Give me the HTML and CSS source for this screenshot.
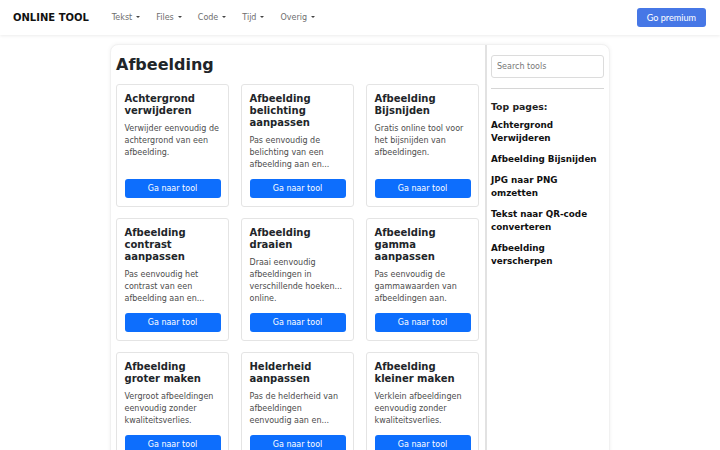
FILE: index.html
```html
<!DOCTYPE html>
<html lang="nl">
<head>
	<meta charset="utf-8">
	<meta name="viewport" content="width=device-width, initial-scale=1.0">
	<title>Afbeelding - Online Tool</title>
	<link rel="stylesheet" href="styles.css">
</head>
<body>
	<nav class="topbar">
		<a class="brand" href="#">ONLINE TOOL</a>
		<ul class="menu">
			<li><a class="menu-link" href="#">Tekst<span class="caret"></span></a></li>
			<li><a class="menu-link" href="#">Files<span class="caret"></span></a></li>
			<li><a class="menu-link" href="#">Code<span class="caret"></span></a></li>
			<li><a class="menu-link" href="#">Tijd<span class="caret"></span></a></li>
			<li><a class="menu-link" href="#">Overig<span class="caret"></span></a></li>
		</ul>
		<a class="premium-btn" href="#">Go premium</a>
	</nav>

	<div class="page">
		<main class="content">
			<h1 class="page-title">Afbeelding</h1>
			<div class="tool-grid">
				<div class="tool-card">
					<h5 class="tool-name">Achtergrond verwijderen</h5>
					<p class="tool-text">Verwijder eenvoudig de achtergrond van een afbeelding.</p>
					<a class="tool-btn" href="#">Ga naar tool</a>
				</div>
				<div class="tool-card">
					<h5 class="tool-name">Afbeelding belichting aanpassen</h5>
					<p class="tool-text">Pas eenvoudig de belichting van een afbeelding aan en...</p>
					<a class="tool-btn" href="#">Ga naar tool</a>
				</div>
				<div class="tool-card">
					<h5 class="tool-name">Afbeelding Bijsnijden</h5>
					<p class="tool-text">Gratis online tool voor het bijsnijden van afbeeldingen.</p>
					<a class="tool-btn" href="#">Ga naar tool</a>
				</div>
				<div class="tool-card">
					<h5 class="tool-name">Afbeelding contrast aanpassen</h5>
					<p class="tool-text">Pas eenvoudig het contrast van een afbeelding aan en...</p>
					<a class="tool-btn" href="#">Ga naar tool</a>
				</div>
				<div class="tool-card">
					<h5 class="tool-name">Afbeelding draaien</h5>
					<p class="tool-text">Draai eenvoudig afbeeldingen in verschillende hoeken... online.</p>
					<a class="tool-btn" href="#">Ga naar tool</a>
				</div>
				<div class="tool-card">
					<h5 class="tool-name">Afbeelding gamma aanpassen</h5>
					<p class="tool-text">Pas eenvoudig de gammawaarden van afbeeldingen aan.</p>
					<a class="tool-btn" href="#">Ga naar tool</a>
				</div>
				<div class="tool-card">
					<h5 class="tool-name">Afbeelding groter maken</h5>
					<p class="tool-text">Vergroot afbeeldingen eenvoudig zonder kwaliteitsverlies.</p>
					<a class="tool-btn" href="#">Ga naar tool</a>
				</div>
				<div class="tool-card">
					<h5 class="tool-name">Helderheid aanpassen</h5>
					<p class="tool-text">Pas de helderheid van afbeeldingen eenvoudig aan en...</p>
					<a class="tool-btn" href="#">Ga naar tool</a>
				</div>
				<div class="tool-card">
					<h5 class="tool-name">Afbeelding kleiner maken</h5>
					<p class="tool-text">Verklein afbeeldingen eenvoudig zonder kwaliteitsverlies.</p>
					<a class="tool-btn" href="#">Ga naar tool</a>
				</div>
			</div>
		</main>

		<aside class="sidebar">
			<input class="search" type="text" placeholder="Search tools">
			<hr class="divider">
			<h6 class="top-title">Top pages:</h6>
			<ul class="top-list">
				<li><a href="#">Achtergrond Verwijderen</a></li>
				<li><a href="#">Afbeelding Bijsnijden</a></li>
				<li><a href="#">JPG naar PNG omzetten</a></li>
				<li><a href="#">Tekst naar QR-code converteren</a></li>
				<li><a href="#">Afbeelding verscherpen</a></li>
			</ul>
		</aside>
	</div>
</body>
</html>
```

FILE: styles.css
```css
body {
	margin: 0;
	font-family: "DejaVu Sans", sans-serif;
	color: #212529;
	background: #fff;
	overflow: hidden;
}
a {
	text-decoration: none;
}

/* top navigation */
.topbar {
	display: flex;
	align-items: center;
	height: 35px;
	padding: 0 14px 0 13px;
	background: #fff;
	box-shadow: 0 1px 3px rgba(0, 0, 0, 0.08);
}
.brand {
	font-size: 10px;
	font-weight: bold;
	color: #111;
	margin-right: 15px;
}
.menu {
	display: flex;
	list-style: none;
	margin: 0;
	padding: 0;
	flex: 1;
}
.menu-link {
	display: block;
	padding: 0 8px;
	font-size: 8px;
	color: #6e6e6e;
}
.caret {
	display: inline-block;
	margin-left: 4px;
	vertical-align: 2px;
	border-top: 2.4px solid #444;
	border-left: 2.4px solid transparent;
	border-right: 2.4px solid transparent;
}
.premium-btn {
	display: block;
	height: 19px;
	line-height: 19px;
	padding: 0 10px;
	font-family: Lato, "Open Sans", sans-serif;
	font-size: 9.1px;
	color: #fff;
	background: #4677e6;
	border-radius: 3px;
}

/* page body */
.page {
	display: flex;
	width: 500px;
	margin: 9px auto 0;
	background: #fff;
	border: 1px solid #f1f1f1;
	border-radius: 8px;
	box-shadow: 0 0 4px rgba(0, 0, 0, 0.06);
	box-sizing: border-box;
	min-height: 420px;
}
.content {
	width: 374px;
	padding: 10px 6px 0 5px;
	box-sizing: border-box;
}
.page-title {
	font-size: 16px;
	line-height: 19.2px;
	margin: 0 0 10px;
}
.tool-grid {
	display: grid;
	grid-template-columns: repeat(3, 113px);
	column-gap: 12px;
	row-gap: 11px;
}
.tool-card {
	display: flex;
	flex-direction: column;
	border: 1px solid #e4e4e4;
	border-radius: 3px;
	padding: 8px 7.5px;
}
.tool-name {
	font-size: 10px;
	line-height: 12px;
	margin: 0 0 6px;
}
.tool-text {
	font-size: 8px;
	line-height: 12px;
	color: #4c4c4c;
	margin: 0 0 8px;
}
.tool-btn {
	display: block;
	margin-top: auto;
	height: 19px;
	line-height: 19px;
	text-align: center;
	font-size: 8px;
	color: #fff;
	background: #0d6efd;
	border-radius: 3px;
}

/* sidebar */
.sidebar {
	width: 124px;
	border-left: 2px solid #e2e2e2;
	padding: 10px 5px 0 4px;
	box-sizing: border-box;
}
.search {
	display: block;
	width: 100%;
	height: 23px;
	box-sizing: border-box;
	padding: 0 5px;
	font-family: "DejaVu Sans", sans-serif;
	font-size: 8px;
	border: 1px solid #dcdcdc;
	border-radius: 3px;
	outline: none;
}
.search::placeholder {
	color: #777;
}
.divider {
	border: 0;
	border-top: 1px solid #d6d6d6;
	margin: 10px 0 12px;
}
.top-title {
	font-size: 9.3px;
	line-height: 11px;
	margin: 0 0 7px;
	color: #222;
}
.top-list {
	list-style: none;
	margin: 0;
	padding: 0;
}
.top-list li {
	font-size: 8.8px;
	line-height: 13px;
	margin-bottom: 8px;
}
.top-list a {
	font-weight: bold;
	color: #111;
}
```
